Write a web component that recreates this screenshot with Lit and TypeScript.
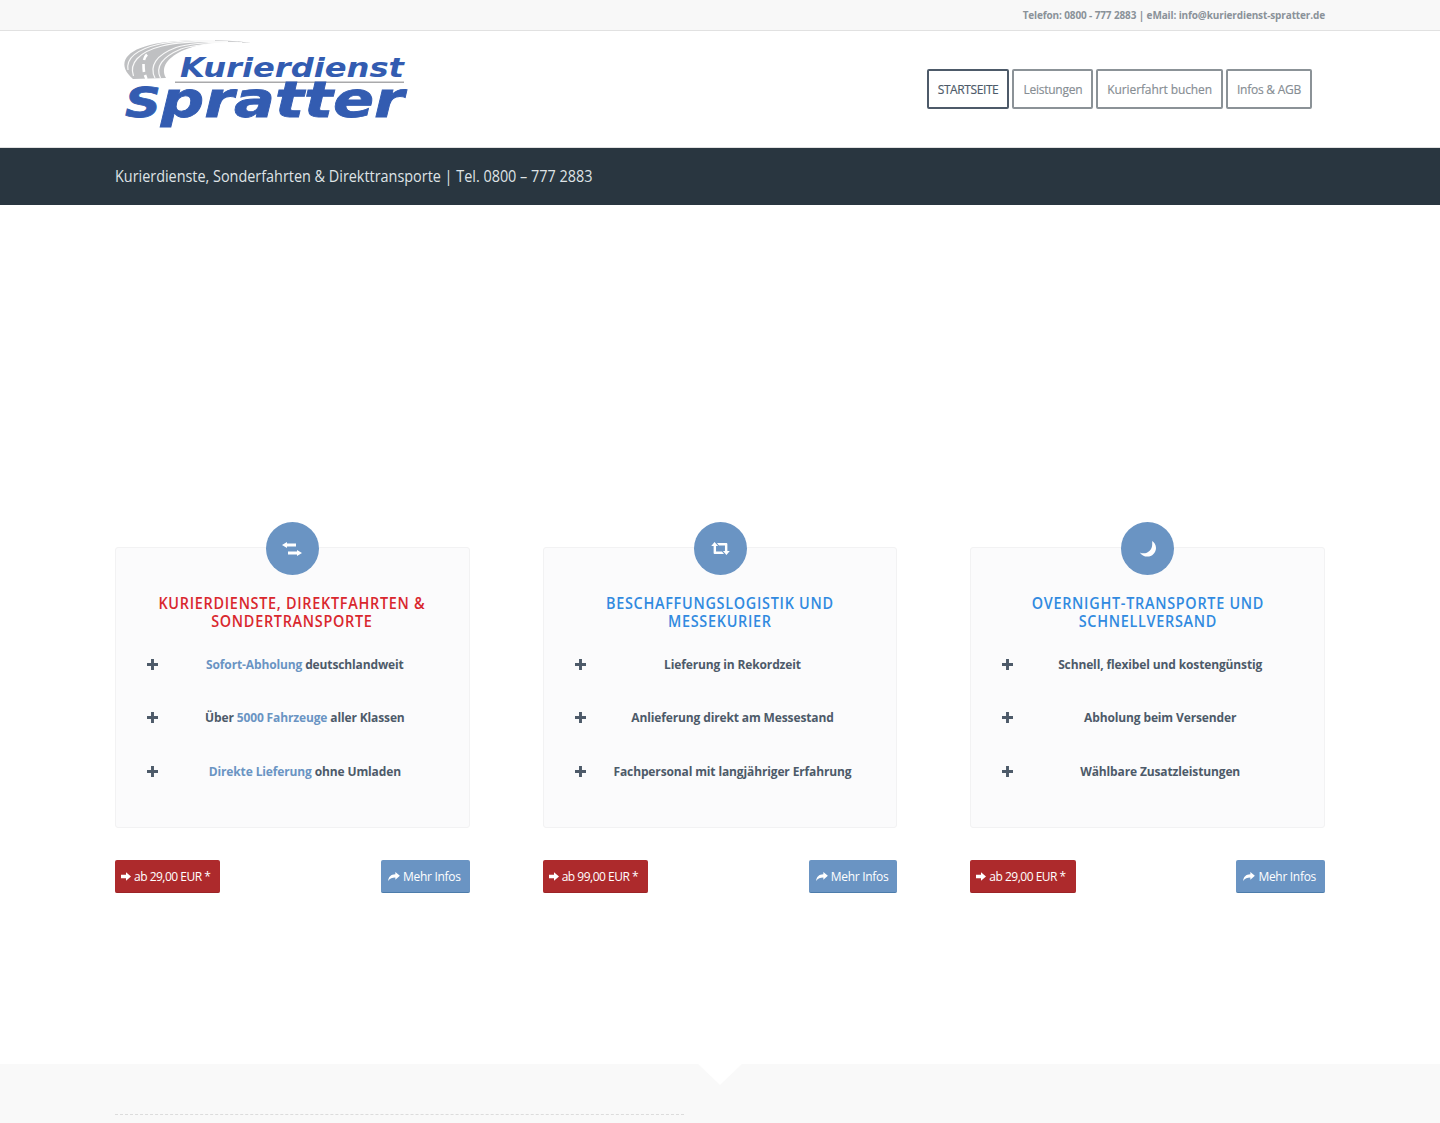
import { LitElement, html, css, svg } from "lit";
import { customElement } from "lit/decorators.js";

const plus = html`<svg class="plus" viewBox="0 0 12 12"><path d="M4.400 0h3.200v4.400H12v3.200H7.600V12H4.400V7.600H0V4.400h4.400z"/></svg>`;

const exchange = html`<svg class="ci" viewBox="0 0 20 14" style="width:20px;height:14px"><path d="M0 3 5 0v1.600h9v2.800H5V6zM20 11 15 14v-1.600H6V9.600h9V8z" fill="#fff"/></svg>`;
const retweet = html`<svg class="ci" viewBox="0 0 20 14" style="width:19px;height:13px"><path d="M3.600 0 7.400 4.400H5.200v5.800h6.400l2.200 2.600H3.600a1 1 0 0 1-1-1V4.400H0zM16.400 14l-3.800-4.400h2.200V3.800H8.400L6.200 1.200h10.200a1 1 0 0 1 1 1v7.400H20z" fill="#fff"/></svg>`;
const moon = html`<svg class="ci" viewBox="0 0 18 16" style="width:18px;height:16px"><path d="M13.200 0C15.200 1.400 17 3.600 17 7c0 4.800-3.800 8.600-8.600 8.600C5.200 15.600 2.400 14 .8 11.400c1.200.6 2.200.8 3.600.8 5 0 8.800-3.800 8.800-8.800 0-1.200 0-2.200 0-3.400z" fill="#fff"/></svg>`;

const arrowRight = html`<svg class="bi" viewBox="0 0 12 10" style="width:10px;height:9px"><path d="M0 2.800h6V0l6 5-6 5V7.200H0z" fill="#fff"/></svg>`;
const share = html`<svg class="bi" viewBox="0 0 13 10" style="width:12px;height:9px"><path d="M8 0l5 4.300L8 8.600V6C4.500 6 2 6.600 0 10c.4-4.600 3-7.300 8-7.500z" fill="#fff"/></svg>`;

const logo = svg`
<svg class="logo" width="295" height="92" viewBox="115 37 295 92" role="img" aria-label="Kurierdienst Spratter">
  <path d="M133 79C118 66 122 52 150 45 172 40 215 38 251 43 225 41 200 43 184 50 168 57 160 67 166 78Z" fill="#bfc0c2"/>
  <path d="M128 70C126 58 138 49 160 44 175 41 195 40 215 40.500M133.500 76C129 64 138 52 162 46 178 42 200 41 228 41.500M155 78C149 66 156 55 176 47.500 190 43 212 42 238 42.300M160.500 78C155 67 162 57 181 49 193 44.500 212 43 242 42.500" stroke="#fff" stroke-width="1.200" fill="none" opacity=".9"/>
  <path d="M144 60C144.500 58 145.500 56 147 54.500M144 72C143.500 69 143.500 67 143.500 64M146.500 79C146 77.500 145.500 76.500 145 75" stroke="#fff" stroke-width="2.600" fill="none"/>
  <rect x="175" y="81.500" width="229" height="1.500" fill="#a9a9ab"/>
  <text x="180" y="77" class="lk" textLength="224" lengthAdjust="spacingAndGlyphs">Kurierdienst</text>
  <text x="125" y="117" class="ls" textLength="279" lengthAdjust="spacingAndGlyphs"><tspan class="lc">S</tspan>pratter</text>
</svg>`;

interface Col {
  title: string;
  red: boolean;
  icon: unknown;
  items: unknown[];
  price: string;
}

const cols: Col[] = [
  {
    title: "Kurierdienste, Direktfahrten & Sondertransporte",
    red: true,
    icon: exchange,
    items: [
      html`<b>Sofort-Abholung</b> deutschlandweit`,
      html`Über <b>5000 Fahrzeuge</b> aller Klassen`,
      html`<b>Direkte Lieferung</b> ohne Umladen`,
    ],
    price: "ab 29,00 EUR *",
  },
  {
    title: "Beschaffungslogistik und Messekurier",
    red: false,
    icon: retweet,
    items: ["Lieferung in Rekordzeit", "Anlieferung direkt am Messestand", "Fachpersonal mit langjähriger Erfahrung"],
    price: "ab 99,00 EUR *",
  },
  {
    title: "Overnight-Transporte und Schnellversand",
    red: false,
    icon: moon,
    items: ["Schnell, flexibel und kostengünstig", "Abholung beim Versender", "Wählbare Zusatzleistungen"],
    price: "ab 29,00 EUR *",
  },
];

@customElement("app-root")
export class AppRoot extends LitElement {
  static styles = css`
    :host {
      display: block;
      position: relative;
      height: 1123px;
      overflow: hidden;
      background: #fff;
      font-family: "Open Sans", "Noto Sans", sans-serif;
      color: #4d5a69;
    }
    .wrap { width: 1210px; margin: 0 auto; }
    .top {
      height: 30px;
      background: #f8f8f8;
      border-bottom: 1px solid #e1e1e1;
    }
    .top .wrap {
      display: flex;
      justify-content: flex-end;
      align-items: center;
      height: 30px;
      font-size: 10px;
      font-weight: 700;
      color: #8a9299;
      letter-spacing: -0.125px;
    }
    .head { height: 116px; border-bottom: 1px solid #e1e1e1; }
    .head .wrap {
      display: flex;
      justify-content: space-between;
      align-items: center;
      height: 116px;
    }
    .logo { display: block; align-self: flex-start; margin-top: 6px; }
    .lk {
      font: italic 700 27px "DejaVu Sans", sans-serif;
      fill: #335cb1;
    }
    .ls {
      font: italic 700 50px "DejaVu Sans", sans-serif;
      fill: #335cb1;
      stroke: #335cb1;
      stroke-width: 0.8px;
    }
    .lc { font-size: 41px; }
    nav { display: flex; gap: 3px; margin-right: 13px; }
    nav a {
      display: flex;
      align-items: center;
      height: 36px;
      padding: 0 9px;
      border: 2px solid #8b9297;
      border-radius: 2px;
      font-size: 12px;
      color: #868d93;
      letter-spacing: -0.25px;
      -webkit-text-stroke: 0.15px currentColor;
    }
    nav a:nth-child(3) { letter-spacing: -0.1px; }
    nav a.on { border-color: #4d5a69; color: #4d5a69; letter-spacing: -0.4px; }
    .bar { height: 57px; background: #293640; }
    .bar .wrap {
      display: flex;
      align-items: center;
      height: 56px;
      font-size: 16px;
      color: #dfe3e6;
    }
    .bar span {
      white-space: nowrap;
      transform: scaleX(0.9);
      transform-origin: left center;
    }
    .cols {
      display: grid;
      grid-template-columns: repeat(3, 354.670px);
      justify-content: space-between;
      padding-top: 317px;
    }
    .col { display: flex; flex-direction: column; }
    .circle {
      width: 53px;
      height: 53px;
      border-radius: 50%;
      background: #6a94c3;
      display: flex;
      align-items: center;
      justify-content: center;
      align-self: center;
      margin-bottom: -28px;
      position: relative;
      z-index: 1;
    }
    .ci, .bi { display: block; flex: none; }
    .card {
      box-sizing: border-box;
      height: 281px;
      padding: 46px 24px 0 30px;
      background: #fbfbfc;
      border: 1px solid #f2f2f3;
      border-radius: 3px;
    }
    h3 {
      margin: 0 -6px 0 -12px;
      font-size: 16px;
      font-weight: 600;
      line-height: 18px;
      letter-spacing: 0.8px;
      text-align: center;
      text-transform: uppercase;
      color: #318ae0;
    }
    h3 span {
      display: block;
      width: 111.100%;
      margin-left: -5.550%;
      transform: scaleX(0.9);
    }
    h3.red { color: #d9272e; }
    ul { list-style: none; margin: 18.500px 0 0; padding: 0; }
    li {
      display: flex;
      align-items: center;
      height: 53.500px;
      font-size: 12px;
      font-weight: 700;
      letter-spacing: -0.13px;
    }
    li:first-child { margin-top: -11px; }
    .plus { width: 11px; height: 11px; fill: #4d5a69; flex: none; margin-left: 1px; margin-right: 7px; }
    li span { flex: 1; text-align: center; }
    li b { color: #6a94c3; font-weight: inherit; }
    .btns {
      display: flex;
      justify-content: space-between;
      margin-top: 32px;
    }
    .btn {
      display: flex;
      align-items: center;
      gap: 3px;
      height: 32px;
      padding: 0 10px 0 6px;
      border-radius: 2px;
      font-size: 12px;
      color: #fff;
      letter-spacing: -0.5px;
      border-bottom: 1px solid transparent;
    }
    .btn.r { background: #ad2a2c; border-bottom-color: #9c2426; }
    .btn.b { background: #6a94c3; border-bottom-color: #4c7cab; padding: 0 9px 0 7px; gap: 3px; letter-spacing: -0.3px; }
    footer {
      position: absolute;
      left: 0;
      right: 0;
      top: 1064px;
      height: 59px;
      background: #f9f9f9;
    }
    .notch {
      position: absolute;
      left: 698px;
      top: 0;
      width: 0;
      height: 0;
      border-left: 22px solid transparent;
      border-right: 22px solid transparent;
      border-top: 21px solid #fff;
    }
    .dash {
      width: 569px;
      margin-top: 49px;
      border-top: 1px dashed #dcdcdc;
    }
    .fw { width: 1210px; margin: 0 auto; padding-top: 1px; }
  `;

  render() {
    return html`
      <div class="top"><div class="wrap">Telefon: 0800 - 777 2883 | eMail: info@kurierdienst-spratter.de</div></div>
      <header class="head">
        <div class="wrap">
          ${logo}
          <nav>
            <a class="on">STARTSEITE</a><a>Leistungen</a><a>Kurierfahrt buchen</a><a>Infos &amp; AGB</a>
          </nav>
        </div>
      </header>
      <div class="bar"><div class="wrap"><span>Kurierdienste, Sonderfahrten &amp; Direkttransporte | Tel. 0800 – 777 2883</span></div></div>
      <main class="wrap cols">
        ${cols.map(
          (c) => html`<section class="col">
            <div class="circle">${c.icon}</div>
            <div class="card">
              <h3 class=${c.red ? "red" : ""}><span>${c.title}</span></h3>
              <ul>${c.items.map((i) => html`<li>${plus}<span>${i}</span></li>`)}</ul>
            </div>
            <div class="btns">
              <a class="btn r">${arrowRight}${c.price}</a>
              <a class="btn b">${share}Mehr Infos</a>
            </div>
          </section>`
        )}
      </main>
      <footer>
        <div class="notch"></div>
        <div class="fw"><div class="dash"></div></div>
      </footer>
    `;
  }
}
